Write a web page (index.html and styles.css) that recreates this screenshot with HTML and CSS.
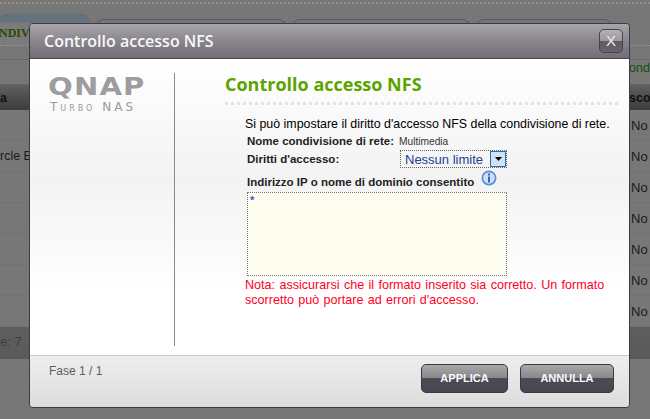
FILE: index.html
```html
<!DOCTYPE html>
<html>
<head>
    <title>Controllo accesso NFS</title>
    <link rel="stylesheet" href="styles.css">
</head>
<body>
    <div class="page">
        <div class="top-dots"></div>
        <div class="tabs">
            <div class="tab tab-active"><span class="tab-label">NDIVI</span></div>
            <div class="tab tab-wide"></div>
            <div class="tab tab-mid"></div>
            <div class="tab tab-last"></div>
        </div>
        <div class="toolbar">
            <div class="toolbar-dots"></div>
            <div class="toolbar-link">ondi</div>
        </div>
        <div class="table-head">
            <span>a</span>
            <span>scos</span>
        </div>
        <div class="rows">
            <div class="row"><span></span><span>No</span></div>
            <div class="row"><span>rcle Bl</span><span>No</span></div>
            <div class="row"><span></span><span>No</span></div>
            <div class="row"><span></span><span>No</span></div>
            <div class="row"><span></span><span>No</span></div>
            <div class="row"><span></span><span>No</span></div>
            <div class="row"><span></span><span>No</span></div>
        </div>
        <div class="table-foot">e: 7</div>
    </div>

    <div class="modal">
        <div class="modal-head">
            <div class="modal-title">Controllo accesso NFS</div>
            <div class="close-btn">X</div>
        </div>
        <div class="modal-body">
            <div class="side">
                <div class="logo">QNAP</div>
                <div class="logo-sub">Turbo NAS</div>
            </div>
            <div class="main">
                <h2 class="main-title">Controllo accesso NFS</h2>
                <div class="main-content">
                    <p class="intro">Si può impostare il diritto d'accesso NFS della condivisione di rete.</p>
                    <div class="form-row share-row">
                        <span class="label">Nome condivisione di rete:</span>
                        <span class="share-name">Multimedia</span>
                    </div>
                    <div class="form-row rights-row">
                        <span class="label">Diritti d'accesso:</span>
                        <div class="select">
                            <span class="select-value">Nessun limite</span>
                            <span class="select-arrow"><svg width="7" height="4" viewBox="0 0 7 4"><path d="M0 0h7L3.5 4z" fill="#000"/></svg></span>
                        </div>
                    </div>
                    <div class="form-row ip-row">
                        <span class="label">Indirizzo IP o nome di dominio consentito</span>
                        <svg class="info" width="16" height="16" viewBox="0 0 16 16">
                            <circle cx="8" cy="8" r="7.5" fill="#5b8fd8"/>
                            <circle cx="8" cy="8" r="5.8" fill="#cfe0f6"/>
                            <path d="M7 3.5h2v2H7zM7 6.5h2v6H7z" fill="#2f68c0"/>
                        </svg>
                    </div>
                    <div class="ip-box">*</div>
                    <p class="note">Nota: assicurarsi che il formato inserito sia corretto. Un formato scorretto può portare ad errori d'accesso.</p>
                </div>
            </div>
        </div>
        <div class="modal-foot">
            <div class="step">Fase 1 / 1</div>
            <div class="buttons">
                <div class="btn">APPLICA</div>
                <div class="btn">ANNULLA</div>
            </div>
        </div>
    </div>
</body>
</html>
```

FILE: styles.css
```css
body {
    margin: 0;
    width: 650px;
    height: 419px;
    overflow: hidden;
    background: #777;
    font-family: "Liberation Sans", Arial, sans-serif;
    font-size: 12.5px;
    color: #000;
}
.page {
    height: 419px;
    display: flex;
    flex-direction: column;
}
.top-dots {
    height: 3px;
    margin-top: 2px;
    border-top: 2px dotted #8f8f8f;
}
.tabs {
    display: flex;
    gap: 6px;
    height: 31px;
    margin-top: 7px;
}
.tab {
    width: 137px;
    border: 1px solid #5c5c5c;
    border-bottom: none;
    border-radius: 8px 8px 0 0;
    margin-top: 5px;
}
.tab-active {
    width: 89px;
    margin-top: 0;
    margin-left: -1px;
    border-color: #5f6f7a;
    background: linear-gradient(#64727c 0, #64727c 7px, #7b7b7b 8px);
}
.tab-label {
    display: block;
    padding-top: 11px;
    font: bold 12px "Liberation Serif", serif;
    color: #2e4a00;
    text-indent: -1px;
}
.tab-wide { width: 188px; }
.tab-mid { width: 176px; }
.tab-last { flex: 1; margin-right: 38px; }
.toolbar {
    height: 38px;
    border-top: 1px dotted #9a9a9a;
    border-bottom: 1px solid #666;
    display: flex;
    align-items: center;
    justify-content: flex-end;
    position: relative;
}
.toolbar-dots {
    position: absolute;
    left: 0;
    right: 0;
    top: 13px;
    border-top: 1px solid #6a6a6a;
}
.toolbar-link {
    margin-top: 6px;
    color: #12500f;
    width: 21px;
    overflow: hidden;
    white-space: nowrap;
}
.table-head {
    height: 25px;
    flex: none;
    background: linear-gradient(#5f5f5f, #3e3c3c);
    display: flex;
    justify-content: space-between;
    align-items: center;
    font-weight: bold;
    color: #111;
}
.table-head span:last-child {
    width: 21px;
    overflow: hidden;
    white-space: nowrap;
}
.rows {
    display: flex;
    flex-direction: column;
}
.row {
    height: 31px;
    display: flex;
    justify-content: space-between;
    align-items: center;
    border-bottom: 1px solid #727272;
    box-sizing: border-box;
    color: #1a1a1a;
}
.row span:last-child {
    width: 19px;
    font-size: 13px;
}
.table-foot {
    height: 32px;
    line-height: 29px;
    background: linear-gradient(#5f5f5f, #595959);
    color: #3c3c3c;
    font-size: 13px;
}

/* dialog floats over the page */
.modal {
    position: absolute;
    left: 29px;
    top: 23px;
    width: 599px;
    height: 383px;
    display: flex;
    flex-direction: column;
    border: 1px solid #3a3a4a;
    border-radius: 4px;
    overflow: hidden;
}
.modal-head {
    height: 34px;
    flex: none;
    display: flex;
    align-items: center;
    justify-content: space-between;
    padding: 0 6px 0 14px;
    background: linear-gradient(#aaa5aa, #8d888e 45%, #726d74);
    border-bottom: 1px solid #4a474d;
}
.modal-title {
    font: 600 16px "Open Sans", sans-serif;
    color: #f6f8fb;
}
.close-btn {
    width: 22px;
    height: 22px;
    border: 1px solid #444;
    border-radius: 5px;
    background: linear-gradient(#b5b2b7 0, #9c999e 48%, #5f5a63 50%, #68636c);
    color: #eee;
    font: 15px/22px "Liberation Sans", sans-serif;
    text-align: center;
}
.modal-body {
    flex: 1;
    display: flex;
    padding: 14px 0 9px;
    background: linear-gradient(#fff 0, #f3f3f3 40%, #fff 80%);
}
.side {
    width: 145px;
    box-sizing: border-box;
    padding-left: 18px;
    flex: none;
    border-right: 1px solid #8a8a8a;
    color: #9b9b9b;
}
.logo {
    font: bold 24px/22px "DejaVu Sans", sans-serif;
    color: #9d9d9d;
    letter-spacing: 1px;
    margin-top: 3px;
    transform: scaleX(1.21);
    transform-origin: left;
}
.logo-sub {
    padding-left: 2px;
    margin-top: 2px;
    font: 12px/14px "DejaVu Sans", sans-serif;
    font-variant: small-caps;
    letter-spacing: 3px;
    white-space: nowrap;
}
.main {
    flex: 1;
    padding-left: 50px;
    padding-right: 11px;
}
.main-title {
    margin: 0;
    padding: 0 0 6px;
    font: bold 18px/23px "Open Sans", sans-serif;
    color: #5ca300;
    border-bottom: 3px dotted #e4e4da;
}
.main-content {
    padding-left: 20px;
}
.intro {
    margin: 12px 0 0 0;
    line-height: 15px;
    font-size: 12.4px;
}
.form-row {
    display: flex;
    align-items: center;
    margin-left: 2px;
    font-size: 11.5px;
}
.label {
    font-weight: bold;
    color: #222;
}
.share-row {
    height: 16px;
    margin-top: 1px;
}
.share-name {
    margin-left: 5px;
    font-size: 10.2px;
    color: #333;
}
.rights-row {
    justify-content: space-between;
    height: 20px;
    width: 260px;
}
.select {
    width: 107px;
    height: 18px;
    box-sizing: border-box;
    border: 1px dotted #666;
    display: flex;
    align-items: center;
    justify-content: space-between;
    padding-left: 4px;
    font-size: 13px;
    color: #1b3f8f;
}
.select-arrow {
    width: 16px;
    height: 16px;
    box-sizing: border-box;
    border: 1px solid #2f6ea8;
    background: #cfe3f5;
    display: flex;
    align-items: center;
    justify-content: center;
}
.ip-row {
    height: 23px;
    padding-top: 2px;
    box-sizing: border-box;
    gap: 7px;
}
.info { margin-top: -7px; }
.ip-box {
    width: 260px;
    height: 84px;
    margin-left: 2px;
    box-sizing: border-box;
    border: 1px dotted #777;
    background: #fdfdef;
    padding: 1px 2px;
    font-weight: bold;
    font-size: 11px;
    color: #2a5db0;
}
.note {
    margin: 2px 0 0 0;
    width: 370px;
    line-height: 15px;
    font-size: 12.6px;
    word-spacing: 0.8px;
    color: #ff0026;
}
.modal-foot {
    height: 52px;
    flex: none;
    box-sizing: border-box;
    display: flex;
    justify-content: space-between;
    padding: 8px 15px 0 19px;
    background: linear-gradient(#eee, #dcdcdc);
    border-top: 1px solid #c9c9c9;
}
.step {
    color: #5c5c66;
    font-size: 12px;
}
.buttons {
    display: flex;
    gap: 12px;
}
.btn {
    width: 87px;
    height: 29px;
    box-sizing: border-box;
    border: 1px solid #3a3a3e;
    border-radius: 5px;
    background: linear-gradient(#a8a7a9 0, #88878a 48%, #4e4a55 50%, #4a4651);
    color: #f8f8f8;
    font: bold 11px/27px "Liberation Sans", sans-serif;
    text-align: center;
}
.btn + .btn { width: 94px; }
```
